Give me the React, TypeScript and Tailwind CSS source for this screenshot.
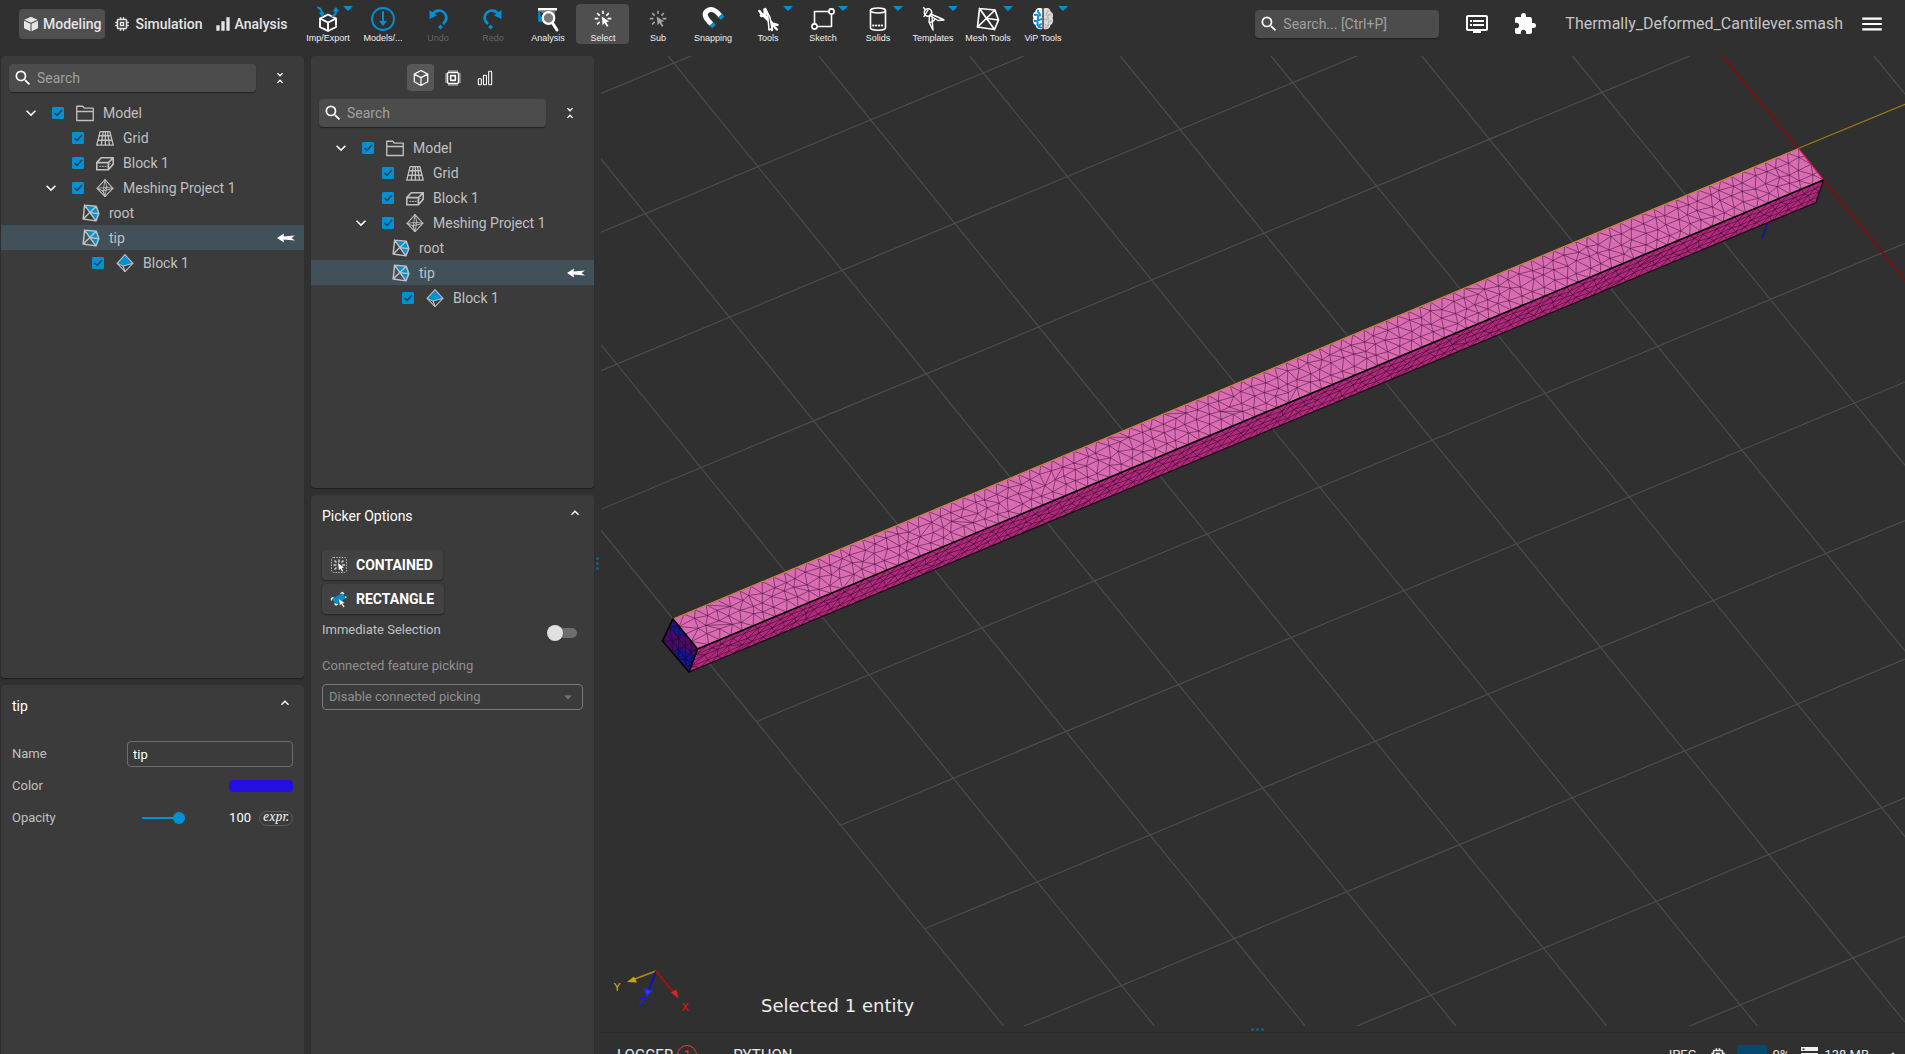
import React, { useId, useState } from "react";
import {
  MdArrowDropDown,
  MdDvr,
  MdExpandLess,
  MdExpandMore,
  MdExtension,
  MdMemory,
  MdMenu,
  MdSearch,
  MdUnfoldLess,
} from "react-icons/md";

const BLUE = "#0090d3";

/* ---------- small icons ---------- */

type IconProps = { className?: string };

const Svg = ({ children, className = "size-6" }: IconProps & { children: React.ReactNode }) => (
  <svg
    viewBox="0 0 24 24"
    className={className}
    fill="none"
    stroke="currentColor"
    strokeWidth={1.6}
    strokeLinejoin="round"
    strokeLinecap="round"
    aria-hidden="true"
  >
    {children}
  </svg>
);

const CubeSolid = ({ className }: IconProps) => (
  <Svg className={className}>
    <path d="M12 1 22 5.5 12 10 2 5.5Z" fill="currentColor" stroke="none" />
    <path d="M1.5 7.2 11.2 11.6V23L1.5 18.2Z" fill="currentColor" stroke="none" />
    <path d="M22.500 7.200 12.800 11.600V23L22.500 18.200Z" fill="currentColor" stroke="none" />
  </Svg>
);

const CubeLine = ({ className }: IconProps) => (
  <Svg className={className}>
    <path d="M12 2 21 6.800V17L12 22 3 17V6.800ZM3 6.800 12 11.500 21 6.800M12 11.500V22" />
  </Svg>
);

const BarsSolid = ({ className }: IconProps) => (
  <Svg className={className}>
    <path d="M2 14h5v8H2zM9.500 8h5v14h-5zM17 2h5v20h-5z" fill="currentColor" stroke="none" />
  </Svg>
);

const BarsLine = ({ className }: IconProps) => (
  <Svg className={className}>
    <rect x="2" y="13" width="4.500" height="9" rx="1" />
    <rect x="9.700" y="8" width="4.500" height="14" rx="1" />
    <rect x="17.500" y="2" width="4.500" height="20" rx="1" />
  </Svg>
);

const ChipLine = ({ className }: IconProps) => (
  <Svg className={className}>
    <rect x="4" y="4" width="16" height="16" rx="1" strokeWidth="1.800" />
    <rect x="8.500" y="8.500" width="7" height="7" strokeWidth="2.400" />
    <path
      d="M6 .5v3M9 .5v3M12 .5v3M15 .5v3M18 .5v3M6 20.500v3M9 20.500v3M12 20.500v3M15 20.500v3M18 20.500v3M.5 6h3M.5 9h3M.5 12h3M.5 15h3M.5 18h3M20.500 6h3M20.500 9h3M20.500 12h3M20.500 15h3M20.500 18h3"
      strokeWidth="1.500"
      strokeLinecap="butt"
    />
  </Svg>
);

const ImportExport = () => (
  <Svg className="size-6 overflow-visible">
    <path d="M4 11.500 12 7.500 20 11.500V20L12 24 4 20ZM4 11.500 12 15.500 20 11.500M12 15.500V24" strokeDasharray="7 1.500" strokeWidth="1.900" />
    <path d="M2 .5C5 1.500 6 4 6 7" stroke={BLUE} strokeWidth="2" />
    <path d="M2.500 5.500 8.500 5 6.500 10Z" fill={BLUE} stroke="none" />
    <path d="M16.500 9C19 8.500 20 6 20 3.500" stroke={BLUE} strokeWidth="2" />
    <path d="M16.500 4.500 20 0 23 4.500Z" fill={BLUE} stroke="none" />
  </Svg>
);

const ModelsIcon = () => (
  <Svg className="size-6 overflow-visible">
    <circle cx="12" cy="12" r="11" stroke={BLUE} strokeWidth="1.800" />
    <path d="M12 5v12" stroke={BLUE} strokeWidth="2" />
    <path d="M8 14h8l-4 5z" fill={BLUE} stroke="none" />
  </Svg>
);

const UndoIcon = ({ flip = false }: { flip?: boolean }) => (
  <Svg className={flip ? "size-6 -scale-x-100" : "size-6"}>
    <path d="M6 8C9 3 15 2 18.500 6c3 4 2 8-1.500 11" stroke={BLUE} strokeWidth="2.600" strokeLinecap="butt" />
    <path d="M3.500 3v9l7.500-3.500z" fill={BLUE} stroke="none" />
    <path d="M14.500 17.500 16.800 20l-2.300 2.500L12 20z" fill={BLUE} stroke="none" />
  </Svg>
);

const AnalysisIcon = () => (
  <Svg className="size-6 overflow-visible">
    <path d="M3 2v12h3" fill={BLUE} stroke={BLUE} />
    <path d="M3 4h16v10" fill="#777" stroke="none" />
    <path d="M2 1h19v2.500H2z" fill="currentColor" stroke="none" />
    <circle cx="12.500" cy="11" r="5.800" fill="#777" strokeWidth="2.200" />
    <path d="m16.500 16 4.500 7" strokeWidth="3" />
  </Svg>
);

const PickIcon = ({ className }: IconProps) => (
  <Svg className={className}>
    <path
      d="M12 2v4M5 5l3 3M19 5l-3 3M2 11.500h4.500M17.500 11.500H22M5 18.500l3-3"
      strokeWidth="1.900"
      strokeLinecap="butt"
    />
    <path d="m10.500 9 9 6-3.600.7 2.600 4.600-2 1.100-2.600-4.600-2.400 2.700z" fill="currentColor" stroke="none" />
  </Svg>
);

const SnapIcon = () => (
  <Svg className="size-6 overflow-visible">
    <path d="M10.500 17C5 12 2 7 6 4s9-1 13.500 5" strokeWidth="5" strokeLinecap="butt" />
    <path d="m10.500 17 2.500 2.600M19 8.500l2.700 2.800" stroke={BLUE} strokeWidth="5" strokeLinecap="butt" />
  </Svg>
);

const ToolsIcon = () => (
  <Svg className="size-6 overflow-visible">
    <path d="M3.500 4 6 7.500M8.500 2.500 9 7c0 1-3 2.500-4 1.500" strokeWidth="2.600" />
    <path d="m7.500 8 10 10" strokeWidth="3.200" />
    <path d="m21.500 18-3.500-1-2.500 2.500.5 3.500M21 22.500 18.500 20" strokeWidth="2.400" />
    <path d="M9.500 1.500 12 11l1 12 3-1.500-2-11z" strokeWidth="1.500" fill="#303030" />
  </Svg>
);

const SketchIcon = () => (
  <Svg className="size-6 overflow-visible">
    <path d="M3.500 17V4.500h14M20.500 7.500v12H6.500" />
    <circle cx="20.500" cy="4.500" r="2.600" />
    <circle cx="3.500" cy="19.500" r="2.600" />
  </Svg>
);

const SolidIcon = () => (
  <Svg>
    <ellipse cx="12" cy="3.500" rx="7.500" ry="2.500" />
    <path d="M4.500 3.500V21c0 1 3 2.200 7.500 2.200s7.500-1.200 7.500-2.200V3.500" />
    <path d="M7 18.500h10" strokeDasharray=".5 2.400" strokeWidth="1.900" />
  </Svg>
);

const TemplateIcon = () => (
  <Svg className="size-6 overflow-visible">
    <circle cx="7" cy="5.500" r="3.700" strokeWidth="1.500" />
    <path d="M2.500.5 4.500 3M7 3l-4 6.500M9.500 7l9.500 4 4 2-6 .5-8-5zM8.500 9 8 15l4 8-.5-6L11 9.500M8 15c2 1 5-1 6-3" strokeWidth="1.400" />
  </Svg>
);

const MeshIcon = ({ accent = false, className }: IconProps & { accent?: boolean }) => (
  <Svg className={className}>
    {accent && <path d="M4 2 20 4 11 12ZM20 4 22 13 11 12ZM22 13 18 22 11 12Z" fill={BLUE} stroke="none" />}
    <path
      d="M3.500 1.500 19 3 22.500 13 18.500 22.500 1.500 20ZM3.500 1.500 18.500 22.500M19 3 1.500 20M11.500 11.500 22.500 13"
      strokeWidth={accent ? 2 : 1.7}
    />
  </Svg>
);

const BrainIcon = () => (
  <Svg>
    <path d="M11.300 1.500C6 0 4.500 3 4.500 4.500 1.500 6 1.500 9 2.500 11c-1.500 3 0 6 2 7 .5 4 4 5 6.800 4z" fill="#fff" stroke="none" />
    <path d="M12.700 1.500C18 0 19.500 3 19.500 4.500c3 1.500 3 4.500 2 6.500 1.500 3 0 6-2 7-.5 4-4 5-6.800 4z" fill="#ddd" stroke="none" />
    <path d="M7 3.500c-1 3 3 2 2 5M4 8c2-1 4 0 3 3s2 2 3.500 1M3.500 14c2-1 4 1 3 3s2 2 3.500 0M7.500 20l2.500.5" stroke={BLUE} strokeWidth="2" />
    <path d="M17 3.500c1 3-3 2-2 5M20 8c-2-1-4 0-3 3s-2 2-3.500 1M20.500 14c-2-1-4 1-3 3s-2 2-3.500 0M16.500 20l-2.500.5" stroke="#aaa" strokeWidth="1.100" />
  </Svg>
);

const FolderIcon = () => (
  <Svg className="h-5 w-[18px]">
    <path d="M1 22V3h8l2 2.500h12V22ZM1 10h22" strokeWidth="1.800" />
  </Svg>
);

const GridIcon = () => (
  <Svg className="size-[18px]">
    <path d="M5.500 3.500h13L23 21.500H1ZM4.500 9h15M3 15h18M9.500 4 7 21M12.500 4v17M15.500 4 18 21" strokeWidth="1.800" />
  </Svg>
);

const BlockIcon = () => (
  <Svg className="size-[18px]">
    <path d="M1 11.500h15.500V21H1ZM1 11.500 7 5h16l-6.500 6.500M23 5v8.500L16.500 21" strokeWidth="2.200" />
    <path d="M5 16.500h10l5-5" strokeDasharray="1.500 2" strokeWidth="1.300" />
  </Svg>
);

const OctaIcon = ({ filled = false }: { filled?: boolean }) => (
  <Svg className="size-[18px]">
    {filled && <path d="M12 1 23 13 10 16 1 13Z" fill={BLUE} stroke="none" />}
    <path d="M12 .8 22.500 12.500 12 23.500 1.500 12.500Z" strokeWidth="1.400" />
    <path d="M1.500 12.500 9.500 16 22.500 12.500" strokeWidth="1.300" />
    <path d="M9.500 16 12 23.500" strokeWidth="1.600" />
    {!filled && <path d="M12 1 9.500 16M12 1l2.500 10-5 5M14.500 11 1.500 12.500M14.500 11l8 1.500M14.500 11 12 23.500" strokeWidth="1.100" />}
  </Svg>
);

const ArrowMark = () => (
  <svg viewBox="0 0 18 10" className="h-2.5 w-[18px]" aria-hidden="true">
    <path d="M0 5 7 .5 6.500 3.500 18 2.500 14.500 5 18 7.500 6.500 6.500 7 9.500Z" fill="#fff" />
  </svg>
);

const ContainedIcon = () => (
  <svg viewBox="0 0 18 18" className="size-[18px]" fill="none" aria-hidden="true">
    <rect x="1.500" y="1.500" width="15" height="15" rx="2" stroke="#bbb" strokeDasharray="1.500 1.200" />
    <path d="M9 3.500v3M4.500 4.500l2 2M13.500 4.500l-2 2M3.500 9h3M12 9h3M4.500 13.500l2-2" stroke="#ccc" strokeWidth="1.500" />
    <path d="m8 7 6 4.500-2.300.4 1.600 3-1.300.7-1.600-3L9 14.300z" fill="#fff" />
  </svg>
);

const RectangleIcon = () => (
  <svg viewBox="0 0 18 18" className="size-[18px] overflow-visible" fill="none" aria-hidden="true">
    <path d="M2 9 12.500 3 16 8 6 14.500Z" fill={BLUE} />
    <path d="M1.500 10.500V8.500L3.500 7.500M10.500 3.500l2-1 1.500 1.500M4.500 13.500 6 15l2-1M15.500 6.500l.5 1.500" stroke="#fff" strokeWidth="1.300" />
    <path d="m8.500 8.500 6.500 4.500-2.300.4 2 3.200-1.300.8-2-3.200-1.600 1.500z" fill="#fff" stroke="#3b3b3b" strokeWidth=".4" />
  </svg>
);

/* ---------- header ---------- */

const modes = [
  { label: "Modeling", icon: <CubeSolid className="size-4" /> },
  { label: "Simulation", icon: <MdMemory className="size-[18px]" /> },
  { label: "Analysis", icon: <BarsSolid className="size-4" /> },
];

type Tool = { label: string; icon: React.ReactNode; menu?: boolean; off?: boolean };

const tools: Tool[] = [
  { label: "Imp/Export", icon: <ImportExport />, menu: true },
  { label: "Models/...", icon: <ModelsIcon /> },
  { label: "Undo", icon: <UndoIcon />, off: true },
  { label: "Redo", icon: <UndoIcon flip />, off: true },
  { label: "Analysis", icon: <AnalysisIcon /> },
  { label: "Select", icon: <PickIcon className="size-5" /> },
  { label: "Sub", icon: <PickIcon className="size-5 text-neutral-400" /> },
  { label: "Snapping", icon: <SnapIcon /> },
  { label: "Tools", icon: <ToolsIcon />, menu: true },
  { label: "Sketch", icon: <SketchIcon />, menu: true },
  { label: "Solids", icon: <SolidIcon />, menu: true },
  { label: "Templates", icon: <TemplateIcon />, menu: true },
  { label: "Mesh Tools", icon: <MeshIcon />, menu: true },
  { label: "ViP Tools", icon: <BrainIcon />, menu: true },
];

function SearchBox({ placeholder, className }: { placeholder: string; className: string }) {
  return (
    <label className={`flex h-7 items-center gap-1 rounded bg-[#4c4c4c] pl-1 shadow-[0_1px_1px_#222] ${className}`}>
      <MdSearch className="size-5 shrink-0 text-white" />
      <input
        type="search"
        placeholder={placeholder}
        aria-label={placeholder}
        className="w-full min-w-0 bg-transparent text-sm text-white outline-none placeholder:text-[#a0a0a0]"
      />
    </label>
  );
}

function Header() {
  const [mode, setMode] = useState("Modeling");
  const [tool, setTool] = useState("Select");
  return (
    <header className="flex h-14 shrink-0 items-start pr-6 pl-[19px]">
      <nav className="mt-[9px] flex gap-1">
        {modes.map((m) => (
          <button
            key={m.label}
            onClick={() => setMode(m.label)}
            className={`flex h-[30px] items-center gap-1 rounded px-1 text-sm font-medium text-[#e4e4e4] ${
              mode === m.label ? "bg-[#4f4f4f]" : ""
            }`}
          >
            {m.icon}
            {m.label}
          </button>
        ))}
      </nav>
      <div className="mt-1 ml-2.5 flex gap-0.5">
        {tools.map((t) => (
          <button
            key={t.label}
            disabled={t.off}
            onClick={() => setTool(t.label)}
            className={`relative flex h-10 w-[53px] flex-col items-center gap-px rounded pt-[3px] text-white ${
              tool === t.label ? "bg-[#4f4f4f]" : ""
            }`}
          >
            <span className="flex h-6 items-center">{t.icon}</span>
            <span
              className={`font-['Liberation_Sans'] text-[9px] leading-3 whitespace-nowrap ${
                t.off ? "text-[#666]" : "text-[#f0f0f0]"
              }`}
            >
              {t.label}
            </span>
            {t.menu && (
              <svg viewBox="0 0 10 5" className="absolute top-0.5 right-px h-[5px] w-2.5" aria-hidden="true">
                <path d="M0 0h10L5 5z" fill={BLUE} />
              </svg>
            )}
          </button>
        ))}
      </div>
      <div className="mt-2.5 ml-auto flex h-7 items-center">
        <SearchBox placeholder="Search... [Ctrl+P]" className="w-[184px]" />
        <button aria-label="Console" className="ml-[26px] text-white">
          <MdDvr className="size-6" />
        </button>
        <button aria-label="Extensions" className="ml-6 text-white">
          <MdExtension className="size-6" />
        </button>
        <span className="ml-7 text-base text-[#c4c4c4]">Thermally_Deformed_Cantilever.smash</span>
        <button aria-label="Menu" className="-mr-1 ml-4 text-white">
          <MdMenu className="size-[26px]" />
        </button>
      </div>
    </header>
  );
}

/* ---------- model tree ---------- */

function Check({ label }: { label: string }) {
  return (
    <span className="relative flex size-3">
      <input
        type="checkbox"
        defaultChecked
        aria-label={`Show ${label}`}
        className="peer size-3 appearance-none rounded-[1px] border border-[#0090d3] checked:bg-[#0090d3]"
      />
      <svg viewBox="0 0 12 12" className="pointer-events-none absolute inset-0 hidden size-3 peer-checked:block" aria-hidden="true">
        <path d="m2.500 6 2.500 2.500 5-5.500" fill="none" stroke="#3b3b3b" strokeWidth="1.500" />
      </svg>
    </span>
  );
}

type Node = { label: string; icon: React.ReactNode; pad: string; open?: boolean; check?: boolean; active?: boolean };

const nodes: Node[] = [
  { label: "Model", icon: <FolderIcon />, pad: "pl-5", open: true, check: true },
  { label: "Grid", icon: <GridIcon />, pad: "pl-[71px]", check: true },
  { label: "Block 1", icon: <BlockIcon />, pad: "pl-[71px]", check: true },
  { label: "Meshing Project 1", icon: <OctaIcon />, pad: "pl-10", open: true, check: true },
  { label: "root", icon: <MeshIcon accent className="size-[18px]" />, pad: "pl-[81px]" },
  { label: "tip", icon: <MeshIcon accent className="size-[18px]" />, pad: "pl-[81px]", active: true },
  { label: "Block 1", icon: <OctaIcon filled />, pad: "pl-[91px]", check: true },
];

function Tree() {
  return (
    <ul className="mt-2">
      {nodes.map((n, i) => (
        <li
          key={i}
          className={`flex h-[25px] items-center pr-[9px] text-sm text-[#c0c0c0] ${n.pad} ${n.active ? "bg-[#42505a]" : ""}`}
        >
          {n.open && (
            <button aria-label={`Collapse ${n.label}`} className="mr-[11px] text-white">
              <MdExpandMore className="size-5" />
            </button>
          )}
          {n.check && (
            <span className="mr-3">
              <Check label={n.label} />
            </span>
          )}
          {n.icon}
          <span className="ml-[9px]">{n.label}</span>
          {n.active && (
            <span className="ml-auto">
              <ArrowMark />
            </span>
          )}
        </li>
      ))}
    </ul>
  );
}

function TreeSearch() {
  return (
    <div className="flex items-center pl-2">
      <SearchBox placeholder="Search" className="grow" />
      <button aria-label="Collapse all" className="mr-4 ml-4 text-white">
        <MdUnfoldLess className="size-4" />
      </button>
    </div>
  );
}

const panel = "min-h-0 overflow-hidden rounded bg-[#3b3b3b] shadow-[0_1px_1px_#1e1e1e]";

function PanelTitle({ children }: { children: React.ReactNode }) {
  return (
    <div className="flex h-10 items-center justify-between">
      <h2 className="mt-0.5 text-sm text-white">{children}</h2>
      <button aria-label="Collapse section" className="mb-1 text-white">
        <MdExpandLess className="size-4" />
      </button>
    </div>
  );
}

function Properties() {
  const name = useId();
  const color = useId();
  const opacity = useId();
  return (
    <section className={`${panel} rounded-b-none px-[11px]`}>
      <PanelTitle>tip</PanelTitle>
      <div className="mt-4 text-[13px] text-[#c0c0c0]">
        <div className="flex items-center justify-between">
          <label htmlFor={name}>Name</label>
          <input
            id={name}
            defaultValue="tip"
            className="h-[26px] w-[166px] rounded border border-[#6c6c6c] bg-transparent px-[5px] text-white outline-none"
          />
        </div>
        <div className="mt-1.5 flex h-[26px] items-center justify-between">
          <label htmlFor={color}>Color</label>
          <input
            id={color}
            type="color"
            defaultValue="#2310e0"
            className="h-3 w-16 appearance-none overflow-hidden rounded border-0 bg-[#2310e0] p-0 [&::-webkit-color-swatch]:border-0 [&::-webkit-color-swatch-wrapper]:p-0"
          />
        </div>
        <div className="mt-1.5 flex h-[26px] items-center">
          <label htmlFor={opacity} className="grow">
            Opacity
          </label>
          <input
            id={opacity}
            type="range"
            defaultValue={100}
            className="mr-11 h-3 w-[43px] appearance-none bg-transparent [&::-webkit-slider-runnable-track]:h-0.5 [&::-webkit-slider-runnable-track]:bg-[#0090d3] [&::-webkit-slider-thumb]:-mt-[5px] [&::-webkit-slider-thumb]:size-3 [&::-webkit-slider-thumb]:appearance-none [&::-webkit-slider-thumb]:rounded-full [&::-webkit-slider-thumb]:bg-[#0090d3]"
          />
          <output className="mr-2 text-white">100</output>
          <button className="flex h-[15px] items-center rounded-full border border-[#5c5c5c] px-[3px] pb-0.5 font-['Noto_Serif','Liberation_Serif',serif] text-xs text-[#f0f0f0] italic">
            expr.
          </button>
        </div>
      </div>
    </section>
  );
}

function PickerOptions() {
  const immediate = useId();
  const connected = useId();
  const btn =
    "flex h-[30px] items-center gap-2 rounded bg-[#424242] pr-2.5 pl-2 text-sm font-bold text-white shadow-[0_1px_2px_#222]";
  return (
    <section className={`${panel} rounded-b-none px-[11px]`}>
      <PanelTitle>Picker Options</PanelTitle>
      <div className="mt-[15px] flex flex-col items-start gap-1">
        <button className={btn}>
          <ContainedIcon />
          CONTAINED
        </button>
        <button className={btn}>
          <RectangleIcon />
          RECTANGLE
        </button>
      </div>
      <div className="mt-1 flex h-6 items-center justify-between pr-1.5 text-[13px] text-[#c0c0c0]">
        <label htmlFor={immediate}>Immediate Selection</label>
        <input
          id={immediate}
          type="checkbox"
          role="switch"
          className="mt-1.5 flex h-2.5 w-[26px] appearance-none items-center rounded-full bg-[#6e6e6e] before:-ml-1 before:size-4 before:rounded-full before:bg-[#e0e0e0] before:shadow checked:bg-[#0090d3] checked:before:ml-3.5"
        />
      </div>
      <label htmlFor={connected} className="mt-3.5 block text-[13px] leading-5 text-[#8f8f8f]">
        Connected feature picking
      </label>
      <div className="relative mt-2">
        <select
          id={connected}
          disabled
          className="h-[26px] w-full appearance-none rounded border border-[#7a7a7a] bg-transparent px-1.5 text-[13px] text-[#8f8f8f]"
        >
          <option>Disable connected picking</option>
        </select>
        <MdArrowDropDown className="pointer-events-none absolute top-1 right-1.5 size-[18px] text-[#7a7a7a]" />
      </div>
    </section>
  );
}

/* ---------- 3D viewport ---------- */

type P = [number, number];

function random(seed: number) {
  let s = seed;
  return () => {
    s = (s * 1664525 + 1013904223) % 4294967296;
    return s / 4294967296;
  };
}

/** Irregular triangle mesh over the quad a-b-c-d (a-b long edge, a-d short edge). */
function meshPath(a: P, b: P, c: P, d: P, cols: number, rows: number, seed: number) {
  const rnd = random(seed);
  const at = (u: number, v: number): P => [
    (a[0] * (1 - u) + b[0] * u) * (1 - v) + (d[0] * (1 - u) + c[0] * u) * v,
    (a[1] * (1 - u) + b[1] * u) * (1 - v) + (d[1] * (1 - u) + c[1] * u) * v,
  ];
  const pts: P[][] = [];
  for (let j = 0; j <= rows; j++) {
    const row: P[] = [];
    for (let i = 0; i <= cols; i++) {
      const inside = j > 0 && j < rows && i > 0 && i < cols;
      const drift = inside ? 0.2 : 0;
      const shift = j % 2 && i > 0 && i < cols ? 0.5 : 0;
      const u = (i + shift + (rnd() - 0.5) * drift * 2) / cols;
      const v = (j + (rnd() - 0.5) * drift * 2) / rows;
      row.push(at(Math.min(1, Math.max(0, u)), v));
    }
    pts.push(row);
  }
  const seg = (p: P, q: P) => `M${p[0].toFixed(1)} ${p[1].toFixed(1)}L${q[0].toFixed(1)} ${q[1].toFixed(1)}`;
  let path = "";
  for (let j = 0; j <= rows; j++) {
    for (let i = 0; i <= cols; i++) {
      if (i < cols) path += seg(pts[j][i], pts[j][i + 1]);
      if (j < rows) path += seg(pts[j][i], pts[j + 1][i]);
      if (i < cols && j < rows) {
        const flip = rnd() < 0.03;
        const down = (j % 2 === 1) !== flip;
        path += down ? seg(pts[j][i], pts[j + 1][i + 1]) : seg(pts[j][i + 1], pts[j + 1][i]);
      }
    }
  }
  return path;
}

const A: P = [673, 619];
const B: P = [1798.6, 148.5];
const C: P = [1823.5, 180];
const D: P = [697.5, 649];
const E: P = [1816, 202.5];
const F: P = [689, 672];
const G: P = [662.5, 641];

const topMesh = meshPath(A, B, C, D, 101, 4, 7);
const sideMesh = meshPath(D, C, E, F, 101, 4, 21);
const endMesh = meshPath(A, D, F, G, 4, 3, 3);
const quad = (...p: P[]) => p.map((q) => q.join(",")).join(" ");

const columns = [-3, -2, -1, 0, 1, 2, 3, 4, 5, 6, 8];
const crossings = [0, 1, 2, 3, 5, 6, 7, 8, 9, 10];

function Viewport() {
  return (
    <svg viewBox="601 56 1304 970" preserveAspectRatio="xMinYMin slice" className="absolute inset-0 size-full" role="img" aria-label="Cantilever mesh">
      <g stroke="#4c4c4c" strokeWidth="1.200">
        {columns.map((k) => {
          const x = 668.1 + 150.75 * k;
          return <line key={k} x1={x} y1={56} x2={x + 787.8} y2={1026} />;
        })}
        {crossings.map((k) => {
          const c = 343.8 + 138.6 * k;
          const x1 = Math.max(601, (c + 210) / 1.6478);
          return <line key={k} x1={x1} y1={c - 0.4165 * x1} x2={1905} y2={c - 0.4165 * 1905} />;
        })}
      </g>
      <line x1="1723" y1="56" x2="1906" y2="281.500" stroke="#9c0000" strokeWidth="1.300" />
      <line x1="1798" y1="148.500" x2="1905" y2="104.300" stroke="#9c7c10" strokeWidth="1.300" />
      <line x1="1768" y1="222" x2="1761.500" y2="239" stroke="#1010a0" strokeWidth="1.300" />
      <polygon points={quad(A, B, C, D)} fill="#d96cb2" />
      <polygon points={quad(D, C, E, F)} fill="#b02a7c" />
      <polygon points={quad(A, D, F, G)} fill="#4a0a68" />
      <polygon points="674,622 685,635 680,636 670,630" fill="#14148c" />
      <polygon points="677,646 694,656 689,669 675,654" fill="#14148c" />
      <path d={topMesh} stroke="#3d1030" strokeWidth=".7" strokeOpacity=".75" fill="none" />
      <path d={sideMesh} stroke="#2a0620" strokeWidth=".7" strokeOpacity=".75" fill="none" />
      <path d={endMesh} stroke="#12082c" strokeWidth=".7" fill="none" />
      <polyline points={quad(A, B)} stroke="#d08a3c" strokeWidth="1.200" />
      <polyline points={quad(B, C)} stroke="#e0205c" strokeWidth="1.200" />
      <polyline points={quad(C, E, F)} stroke="#1c0414" strokeWidth="1.200" fill="none" />
      <polyline points={quad(C, D)} stroke="#000" strokeWidth="1.600" />
      <polygon points={quad(A, D, F, G)} stroke="#000" strokeWidth="1.600" fill="none" />

      <g strokeWidth="1.800">
        <path d="M656 971 632 980" stroke="#b08c14" />
        <path d="M627 982 634 976.500 637 982.500Z" fill="#c8a41c" />
        <path d="M656 971 649 990" stroke="#0c0cc8" />
        <path d="M644 988.500 652 991 647 996Z" fill="#3c3ce0" stroke="#2828c8" />
        <path d="M656 971 674 993" stroke="#b00c0c" />
        <path d="M671 992.500 676.500 989.500 678.500 998.500Z" fill="#d02828" />
      </g>
      <g className="font-['DejaVu_Sans'] text-[11px]" textAnchor="middle">
        <text x="617" y="991" fill="#d8b414">Y</text>
        <text x="643" y="1006" fill="#1414f0">Z</text>
        <text x="685" y="1011" fill="#e01414">X</text>
      </g>
    </svg>
  );
}

function Dots({ className }: { className: string }) {
  return (
    <span className={`flex gap-[2px] ${className}`}>
      <i className="size-[3px] rounded-full bg-[#15607f]" />
      <i className="size-[3px] rounded-full bg-[#15607f]" />
      <i className="size-[3px] rounded-full bg-[#15607f]" />
    </span>
  );
}

function StatusBar() {
  return (
    <footer className="h-7 shrink-0 overflow-hidden">
      <div className="flex h-[7px] items-center justify-center border-b border-[#2a2a2a] pl-2">
        <Dots className="" />
      </div>
      <div className="flex h-11 items-center pr-1 pl-4 text-[15px] text-[#e8e8e8]">
        <button className="flex items-center gap-1">
          LOGGER
          <span className="flex size-5 items-center justify-center rounded-full border border-[#e04038] text-xs text-[#e04038]">1</span>
        </button>
        <button className="ml-9">PYTHON</button>
        <div className="ml-auto flex items-center text-[13px]">
          <span>JPEG</span>
          <MdMemory className="ml-3 size-[18px]" />
          <span className="ml-2.5 h-5 w-[30px] rounded-xs bg-[#004b6e]" />
          <span className="ml-1.5">0%</span>
          <svg viewBox="0 0 17 16" className="ml-3 h-4 w-[17px]" aria-hidden="true">
            <path d="M0 0h17v4H0zM0 6h17v4H0zM0 12h17v4H0z" fill="#f0f0f0" />
            <path d="M1.500 1.500h2v1.500h-2zM1.500 7.500h2V9h-2zM1.500 13.500h2V15h-2z" fill="#303030" />
          </svg>
          <span className="ml-1.5">138 MB</span>
          <MdExpandLess className="ml-4 size-4" />
        </div>
      </div>
    </footer>
  );
}

/* ---------- page ---------- */

const tabs = [
  { label: "Model", icon: <CubeLine className="size-[18px]" /> },
  { label: "Simulation", icon: <ChipLine className="size-4" /> },
  { label: "Results", icon: <BarsLine className="size-4" /> },
];

export default function App() {
  const [tab, setTab] = useState("Model");
  return (
    <div className="flex h-screen flex-col overflow-hidden bg-[#303030] font-[Roboto,sans-serif]">
      <Header />
      <div className="flex min-h-0 grow pl-px">
        <aside className="grid w-[303px] shrink-0 grid-rows-[622fr_369fr] gap-[7px]">
          <section className={`${panel} pt-2`}>
            <TreeSearch />
            <Tree />
          </section>
          <Properties />
        </aside>
        <aside className="ml-[7px] grid w-[283px] shrink-0 grid-rows-[432fr_559fr] gap-[7px]">
          <section className={`${panel} pt-2`}>
            <div className="mb-2 flex justify-center gap-[5px]">
              {tabs.map((t) => (
                <button
                  key={t.label}
                  aria-label={t.label}
                  onClick={() => setTab(t.label)}
                  className={`flex size-[27px] items-center justify-center rounded text-white ${
                    tab === t.label ? "bg-[#575757]" : ""
                  }`}
                >
                  {t.icon}
                </button>
              ))}
            </div>
            <TreeSearch />
            <Tree />
          </section>
          <PickerOptions />
        </aside>
        <div className="flex w-[7px] shrink-0 items-center justify-center pt-4">
          <Dots className="flex-col" />
        </div>
        <div className="flex min-w-0 grow flex-col">
          <main className="relative min-h-0 grow overflow-hidden">
            <Viewport />
            <p className="absolute bottom-1.5 left-40 font-['DejaVu_Sans'] text-lg text-[#ededed]">Selected 1 entity</p>
          </main>
          <StatusBar />
        </div>
      </div>
    </div>
  );
}
